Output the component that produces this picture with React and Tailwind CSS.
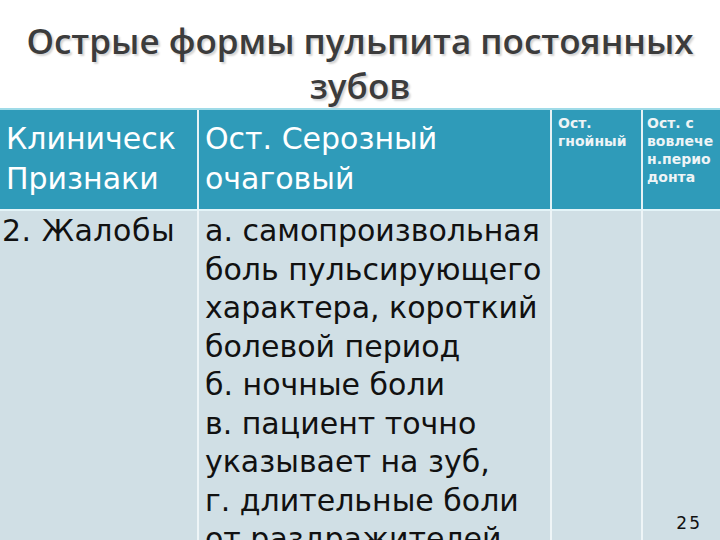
import React from "react";

const bodyLines = [
  "а. самопроизвольная",
  "боль пульсирующего",
  "характера, короткий",
  "болевой период",
  "б. ночные боли",
  "в. пациент точно",
  "указывает на зуб,",
  "г. длительные боли",
  "от раздражителей",
];

export default function App() {
  return (
    <div className="w-[720px] h-[540px] overflow-hidden bg-white flex flex-col">
      {/* title */}
      <div
        className="h-[112px] pt-[18px] text-center text-[#3c3c3c] font-semibold text-[35px] leading-[45px] [text-shadow:2px_2px_2px_#d4d4d4]"
        style={{ fontFamily: '"Open Sans", sans-serif' }}
      >
        Острые формы пульпита постоянных
        <br />
        зубов
      </div>

      {/* table */}
      <div
        className="flex-1 grid grid-cols-[199px_353px_91px_77px] grid-rows-[99px_1fr] border-t-2 border-[#9fdbe8]"
        style={{ fontFamily: '"DejaVu Sans", sans-serif' }}
      >
        <div className="bg-[#2f9bb9] border-r-2 border-[#e6f2f5] pl-[6px] pt-[9px] text-white text-[30px] leading-[40px]">
          Клиническ
          <br />
          Признаки
        </div>
        <div className="bg-[#2f9bb9] border-r-2 border-[#e6f2f5] pl-[6px] pt-[9px] text-white text-[30px] leading-[40px]">
          Ост. Серозный
          <br />
          очаговый
        </div>
        <div className="bg-[#2f9bb9] border-r-2 border-[#e6f2f5] pl-[6px] pt-[4px] text-[#eef4f6] font-bold text-[14px] leading-[18px]">
          Ост.
          <br />
          гнойный
        </div>
        <div className="bg-[#2f9bb9] pl-[4px] pt-[4px] text-[#eef4f6] font-bold text-[14px] leading-[18px]">
          Ост. с
          <br />
          вовлече
          <br />
          н.перио
          <br />
          донта
        </div>

        <div className="bg-[#d0dfe5] border-t-2 border-[#e4f4f8] border-r-2 border-r-[#eef5f7] pl-[2px] pt-[1px] text-[#111] text-[30px] leading-[38.5px] tracking-[0.5px]">
          2. Жалобы
        </div>
        <div className="bg-[#d0dfe5] border-t-2 border-[#e4f4f8] border-r-2 border-r-[#eef5f7] pl-[6px] pt-[1px] text-[#111] text-[30px] leading-[38.5px] whitespace-nowrap">
          {bodyLines.map((l) => (
            <div key={l}>{l}</div>
          ))}
        </div>
        <div className="bg-[#d0dfe5] border-t-2 border-[#e4f4f8] border-r-2 border-r-[#eef5f7]" />
        <div className="bg-[#d0dfe5] border-t-2 border-[#e4f4f8] flex flex-col justify-end items-end pr-[18px] pb-[22px]">
          <span className="text-[#111] text-[17px] tracking-[2px]">25</span>
        </div>
      </div>
    </div>
  );
}
